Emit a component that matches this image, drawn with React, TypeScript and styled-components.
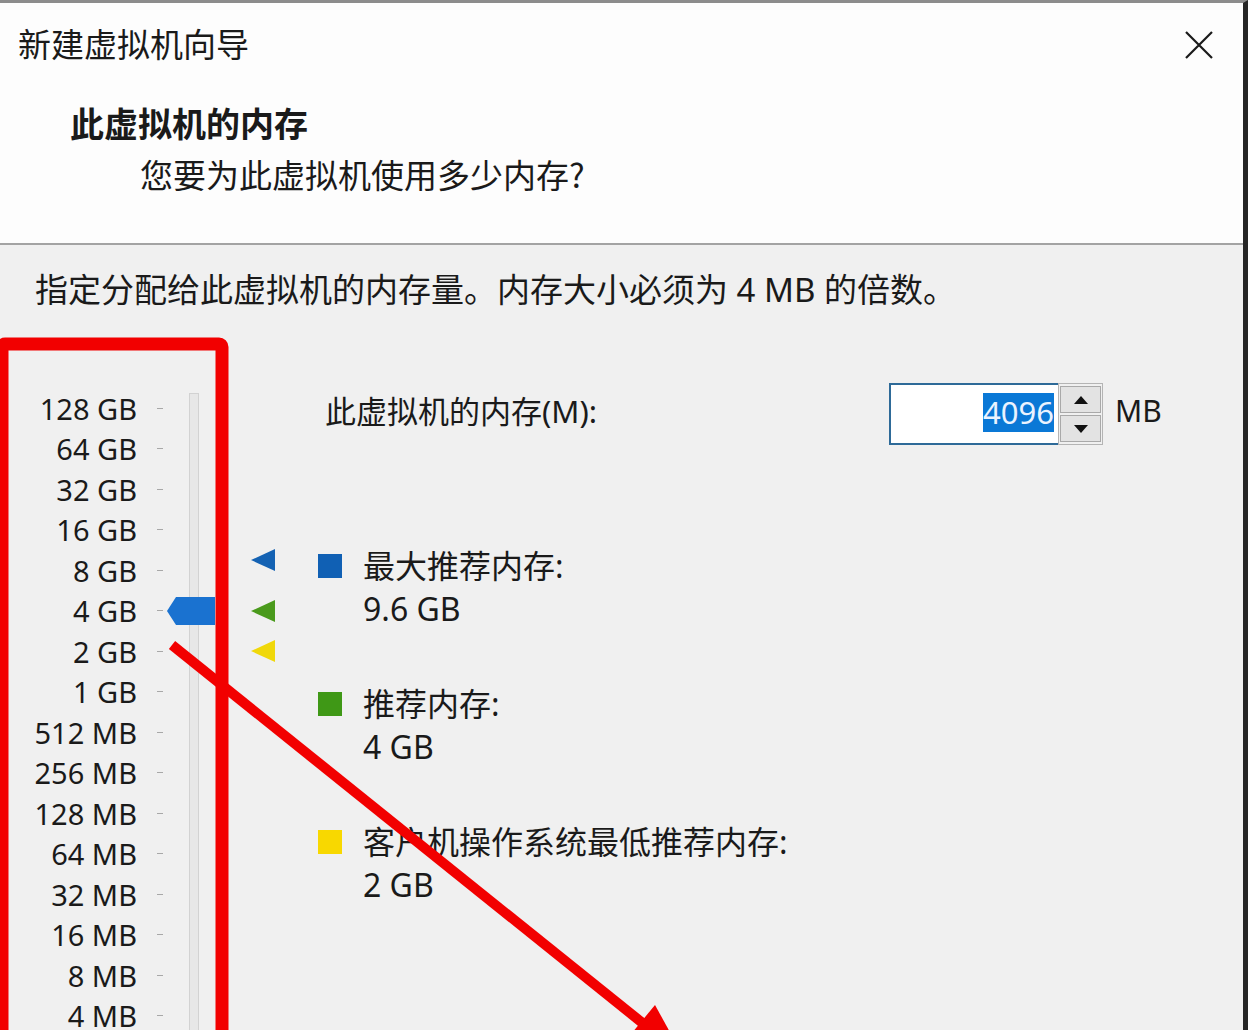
import * as React from 'react';
import styled, { createGlobalStyle } from 'styled-components';

// ----------------------------------------
// data
// ----------------------------------------
const scale = [
  '128 GB', '64 GB', '32 GB', '16 GB', '8 GB', '4 GB', '2 GB', '1 GB',
  '512 MB', '256 MB', '128 MB', '64 MB', '32 MB', '16 MB', '8 MB', '4 MB',
];

const ROW = 40.5;
const TOP_MB = 131072;

// log scale: one row per power of two
const rowCenter = (mb: number) => Math.log2(TOP_MB / mb) * ROW + ROW / 2;

const legend = [
  { color: '#1060b4', label: '最大推荐内存:', value: '9.6 GB', mb: 9830, marker: '#1462b3' },
  { color: '#3f9816', label: '推荐内存:', value: '4 GB', mb: 4096, marker: '#4a9a1c' },
  { color: '#f8d800', label: '客户机操作系统最低推荐内存:', value: '2 GB', mb: 2048, marker: '#f0d80a' },
];

// ----------------------------------------
// component
// ----------------------------------------
export default function App() {
  return (
    <>
      <GlobalStyle />
      <Window>
        <Header>
          <TitleRow>
            <Title>新建虚拟机向导</Title>
            <CloseButton aria-label="关闭">
              <svg width="28" height="28" viewBox="0 0 28 28">
                <path d="M1 1 L27 27 M27 1 L1 27" stroke="#1a1a1a" strokeWidth="2.2" />
              </svg>
            </CloseButton>
          </TitleRow>
          <PageTitle>此虚拟机的内存</PageTitle>
          <PageSubtitle>您要为此虚拟机使用多少内存?</PageSubtitle>
        </Header>

        <Body>
          <Instruction>指定分配给此虚拟机的内存量。内存大小必须为 4 MB 的倍数。</Instruction>

          <Main>
            <Slider>
              <Scale>
                {scale.map((label) => (
                  <ScaleRow key={label}>
                    <ScaleLabel>{label}</ScaleLabel>
                    <Tick />
                  </ScaleRow>
                ))}
              </Scale>
              <Track />
              <Thumb style={{ top: rowCenter(4096) - 14 }}>
                <svg width="48" height="28" viewBox="0 0 48 28">
                  <path d="M0 14 L9 0 H48 V28 H9 Z" fill="#1a72d0" />
                </svg>
              </Thumb>
              {legend.map((item) => (
                <Marker key={item.label} style={{ top: rowCenter(item.mb) - 12 }}>
                  <svg width="24" height="24" viewBox="0 0 24 24">
                    <path d="M0 12 L24 1 V23 Z" fill={item.marker} />
                  </svg>
                </Marker>
              ))}
            </Slider>

            <Content>
              <MemoryRow>
                <MemoryLabel>此虚拟机的内存(M):</MemoryLabel>
                <SpinBox>
                  <SpinInput>
                    <Selected>4096</Selected>
                  </SpinInput>
                  <SpinButtons>
                    <SpinButton aria-label="增加">
                      <svg width="14" height="8" viewBox="0 0 14 8">
                        <path d="M0 8 L7 0 L14 8 Z" fill="#111" />
                      </svg>
                    </SpinButton>
                    <SpinButton aria-label="减少">
                      <svg width="14" height="8" viewBox="0 0 14 8">
                        <path d="M0 0 L14 0 L7 8 Z" fill="#111" />
                      </svg>
                    </SpinButton>
                  </SpinButtons>
                </SpinBox>
                <Unit>MB</Unit>
              </MemoryRow>

              <Legend>
                {legend.map((item) => (
                  <LegendItem key={item.label}>
                    <Swatch $color={item.color} />
                    <LegendText>
                      <div>{item.label}</div>
                      <div>{item.value}</div>
                    </LegendText>
                  </LegendItem>
                ))}
              </Legend>
            </Content>
          </Main>
        </Body>

        <Annotation width="1248" height="1030" viewBox="0 0 1248 1030">
          <rect x="2" y="344" width="220" height="760" rx="3" fill="none" stroke="#f20000" strokeWidth="13" />
          <line x1="172" y1="645" x2="645" y2="1025" stroke="#f20000" strokeWidth="10" />
          <polygon points="655,1005 682,1054 627,1039" fill="#f20000" />
        </Annotation>
      </Window>
    </>
  );
}

// ----------------------------------------
// styles
// ----------------------------------------
const GlobalStyle = createGlobalStyle`
  html, body {
    margin: 0;
    padding: 0;
    background: #f0f0f0;
    overflow: hidden;
  }
  body {
    font-family: "Noto Sans", "Noto Sans CJK SC", sans-serif;
    color: #1a1a1a;
  }
`;

const Window = styled.div`
  position: relative;
  width: 1248px;
  height: 1030px;
  box-sizing: border-box;
  overflow: hidden;
  border-top: 3px solid #8c8c8c;
  border-right: 5px solid #262626;
  background: #f0f0f0;
  display: flex;
  flex-direction: column;
`;

const Header = styled.div`
  flex-shrink: 0;
  background: #fdfdfd;
  height: 242px;
  box-sizing: border-box;
  border-bottom: 2px solid #a3a3a3;
  display: flex;
  flex-direction: column;
`;

const TitleRow = styled.div`
  height: 84px;
  display: flex;
  align-items: center;
  justify-content: space-between;
  padding: 0 30px 0 18px;
`;

const Title = styled.div`
  font-size: 33px;
  line-height: 40px;
  margin-top: -4px;
  font-family: "Noto Sans CJK SC", sans-serif;
`;

const CloseButton = styled.div`
  width: 28px;
  height: 28px;
  display: flex;
`;

const PageTitle = styled.div`
  margin-top: 16px;
  padding-left: 70px;
  font-size: 34px;
  line-height: 40px;
  font-weight: 700;
  font-family: "Noto Sans CJK SC", sans-serif;
`;

const PageSubtitle = styled.div`
  margin-top: 11px;
  padding-left: 140px;
  font-size: 33px;
  line-height: 40px;
  font-family: "Noto Sans CJK SC", sans-serif;
`;

const Body = styled.div`
  flex: 1;
  min-height: 0;
  display: flex;
  flex-direction: column;
`;

const Instruction = styled.div`
  margin-top: 25px;
  padding-left: 35px;
  font-size: 33px;
  line-height: 40px;
`;

const Main = styled.div`
  margin-top: 73px;
  display: flex;
`;

const Slider = styled.div`
  position: relative;
  width: 318px;
  flex-shrink: 0;
  display: flex;
  padding-top: 5px;
`;

const Scale = styled.div`
  width: 163px;
  display: flex;
  flex-direction: column;
`;

const ScaleRow = styled.div`
  height: ${ROW}px;
  display: flex;
  align-items: center;
  justify-content: flex-end;
`;

const ScaleLabel = styled.span`
  font-size: 29px;
  line-height: 1;
  margin-right: 20px;
`;

const Tick = styled.span`
  width: 6px;
  height: 1px;
  background: #a8a8a8;
`;

const Track = styled.div`
  margin: 5px 0 0 26px;
  width: 10px;
  box-sizing: border-box;
  height: 700px;
  background: #e7e7e7;
  border: 1px solid #d2d2d2;
`;

const Thumb = styled.div`
  position: absolute;
  left: 167px;
  margin-top: 5px;
  width: 48px;
  height: 28px;
  display: flex;
`;

const Marker = styled.div`
  position: absolute;
  left: 251px;
  margin-top: 5px;
  width: 24px;
  height: 24px;
  display: flex;
`;

const Content = styled.div`
  flex: 1;
  display: flex;
  flex-direction: column;
`;

const MemoryRow = styled.div`
  height: 62px;
  display: flex;
  align-items: center;
  padding-left: 7px;
`;

const MemoryLabel = styled.div`
  width: 564px;
  font-size: 31px;
  line-height: 40px;
  margin-bottom: 6px;
`;

const SpinBox = styled.div`
  display: flex;
  height: 62px;
  width: 214px;
  margin-right: 12px;
`;

const SpinInput = styled.div`
  flex: 1;
  box-sizing: border-box;
  background: #ffffff;
  border: 2px solid #2e6a98;
  border-right: none;
  display: flex;
  align-items: center;
  justify-content: flex-end;
  padding: 0 4px 4px 0;
`;

const Selected = styled.span`
  background: #0a78d6;
  color: #eaf3ff;
  font-size: 31px;
  line-height: 39px;
`;

const SpinButtons = styled.div`
  width: 45px;
  box-sizing: border-box;
  border: 1px solid #b4b4b4;
  background: #f0f0f0;
  display: flex;
  flex-direction: column;
  gap: 2px;
  padding: 2px 1px;
`;

const SpinButton = styled.div`
  flex: 1;
  box-sizing: border-box;
  background: #e3e3e3;
  border: 1px solid #a9a9a9;
  display: flex;
  align-items: center;
  justify-content: center;
`;

const Unit = styled.div`
  font-size: 30px;
  line-height: 40px;
  margin-bottom: 6px;
`;

const Legend = styled.div`
  margin-top: 99px;
  display: flex;
  flex-direction: column;
  gap: 52px;
`;

const LegendItem = styled.div`
  display: flex;
  gap: 21px;
`;

const Swatch = styled.span<{ $color: string }>`
  width: 24px;
  height: 24px;
  margin-top: 10px;
  background: ${(props) => props.$color};
  flex-shrink: 0;
`;

const LegendText = styled.div`
  font-size: 32px;
  line-height: 43px;
`;

const Annotation = styled.svg`
  position: absolute;
  left: 0;
  top: -3px;
  pointer-events: none;
`;
